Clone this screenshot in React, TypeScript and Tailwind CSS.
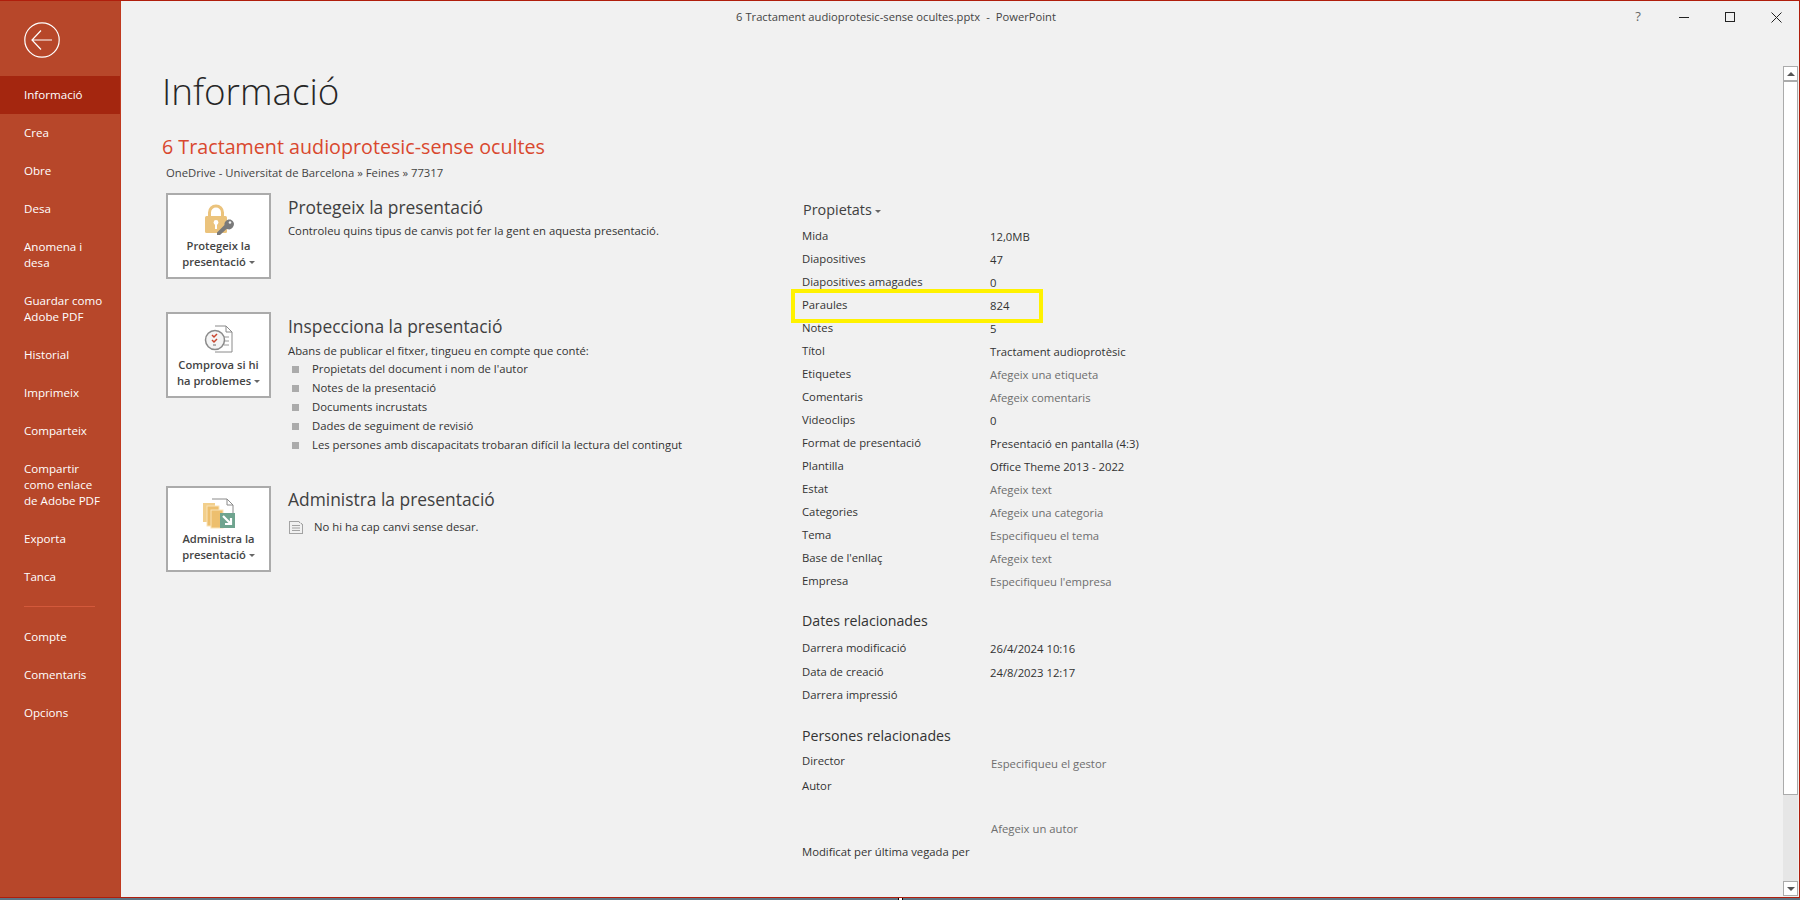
const sideItems = [
  { label: ["Informació"], active: true },
  { label: ["Crea"] },
  { label: ["Obre"] },
  { label: ["Desa"] },
  { label: ["Anomena i", "desa"] },
  { label: ["Guardar como", "Adobe PDF"] },
  { label: ["Historial"] },
  { label: ["Imprimeix"] },
  { label: ["Comparteix"] },
  { label: ["Compartir", "como enlace", "de Adobe PDF"] },
  { label: ["Exporta"] },
  { label: ["Tanca"] },
];

const sideBottom = ["Compte", "Comentaris", "Opcions"];

const props = [
  ["Mida", "12,0MB"],
  ["Diapositives", "47"],
  ["Diapositives amagades", "0"],
  ["Paraules", "824"],
  ["Notes", "5"],
  ["Títol", "Tractament audioprotèsic"],
  ["Etiquetes", "Afegeix una etiqueta", "muted"],
  ["Comentaris", "Afegeix comentaris", "muted"],
  ["Videoclips", "0"],
  ["Format de presentació", "Presentació en pantalla (4:3)"],
  ["Plantilla", "Office Theme 2013 - 2022"],
  ["Estat", "Afegeix text", "muted"],
  ["Categories", "Afegeix una categoria", "muted"],
  ["Tema", "Especifiqueu el tema", "muted"],
  ["Base de l'enllaç", "Afegeix text", "muted"],
  ["Empresa", "Especifiqueu l'empresa", "muted"],
];

const issues = [
  "Propietats del document i nom de l'autor",
  "Notes de la presentació",
  "Documents incrustats",
  "Dades de seguiment de revisió",
  "Les persones amb discapacitats trobaran difícil la lectura del contingut",
];

function Caret() {
  return <span className="ml-[3px] inline-block h-0 w-0 border-x-[3px] border-t-[3px] border-x-transparent border-t-[#666] align-middle" />;
}

function LockIcon() {
  return (
    <svg width="32" height="32" viewBox="0 0 32 32">
      <path d="M6.5 13V8.5a6.5 6.5 0 0 1 13 0V13" fill="none" stroke="#EBC37C" strokeWidth="3" />
      <rect x="2" y="12" width="22" height="17" rx="1.5" fill="#EBC37C" />
      <circle cx="13" cy="18.5" r="2.4" fill="#fff" />
      <rect x="12" y="19" width="2" height="6" fill="#fff" />
      <path d="M14 28.5l0 2.5 3 0 6.5-6 3 0.5c2.5-.5 4.5-3 4.5-5.5 0-2-2-4.5-4.5-4.5-3 0-5.5 2.5-5 5.5z" fill="#7A7A7A" />
      <circle cx="27" cy="18.5" r="1.3" fill="#F1F1F1" />
    </svg>
  );
}

function CheckIcon() {
  return (
    <svg width="30" height="30" viewBox="0 0 30 30" fill="none">
      <path d="M11 2h11l6 6v20H11" fill="#fff" stroke="#8A8A8A" />
      <path d="M22 2v6h6" stroke="#8A8A8A" />
      <path d="M20 13h5M20 17h5M20 21h5" stroke="#9A9A9A" />
      <circle cx="11" cy="16" r="9.5" fill="#F4F4F4" stroke="#8A8A8A" strokeWidth="1.5" />
      <path d="M8 11l2 2 3-3M8 16l2 2 3-3" stroke="#C8452E" strokeWidth="1.5" />
      <rect x="9" y="20" width="3" height="2" fill="#B0B0B0" />
    </svg>
  );
}

function ManageIcon() {
  return (
    <svg width="34" height="32" viewBox="0 0 34 32" fill="none">
      <path d="M10 2h15l6 6v8" fill="#fff" stroke="#8A8A8A" />
      <path d="M25 2v6h6" stroke="#8A8A8A" />
      <rect x="1" y="6" width="12" height="19" fill="#F2CF8C" />
      <rect x="5" y="9" width="12" height="20" fill="#EDBF6E" stroke="#F9E3B8" />
      <rect x="9" y="13" width="12" height="18" fill="#EDBF6E" stroke="#F9E3B8" />
      <rect x="18" y="16" width="15" height="15" fill="#6FA48F" />
      <path d="M21 19l8 8M29 21v6h-6" stroke="#fff" strokeWidth="2.2" />
    </svg>
  );
}

function SmallDoc() {
  return (
    <svg width="16" height="16" viewBox="0 0 16 16" fill="none" stroke="#555">
      <path d="M1.5 2.5h9l4 3v9h-13z" strokeDasharray="1 1" />
      <path d="M4.5 6.5h7M4.5 9h7M4.5 11.5h7" strokeDasharray="1 1" />
    </svg>
  );
}

function BigButton({ icon, lines }: { icon: React.ReactNode; lines: string[] }) {
  return (
    <div className="flex h-[86px] w-[105px] shrink-0 flex-col items-center border-2 border-[#ABABAB] bg-white text-[11.2px] font-semibold leading-[15.5px] text-[#444]">
      <div className="mt-[9px] flex h-[32px] items-center justify-center">{icon}</div>
      <div className="mt-[2px] whitespace-nowrap text-center">
        <div>{lines[0]}</div>
        <div>
          {lines[1]}
          <Caret />
        </div>
      </div>
    </div>
  );
}

function PropRow({ name, value, muted, highlight, h }: { name: string; value: string; muted?: boolean; highlight?: boolean; h?: string }) {
  return (
    <div className={`relative flex items-center ${h ?? "h-[23px]"}`}>
      <div className="w-[188px] shrink-0 text-[#333]">{name}</div>
      <div className={`pt-[2px] ${muted ? "text-[#6E6E6E]" : "text-[#333]"}`}>{value}</div>
      {highlight && <div className="absolute left-[-11px] top-[-5px] h-[34px] w-[252px] border-4 border-[#FFF200]" />}
    </div>
  );
}

export default function App() {
  return (
    <div
      className="flex h-[900px] w-[1800px] flex-col overflow-hidden bg-[#F1F1F1] text-[11.3px]"
      style={{ fontFamily: '"Open Sans", "Noto Sans", sans-serif' }}
    >
      <div className="flex min-h-0 flex-1 border-t-[1px] border-r-[1px] border-b-[1px] border-[#B01E0C]">
        <aside className="flex w-[121px] shrink-0 flex-col border-r border-[#C0391F] bg-[#B7472A] text-[11.6px] text-white">
          <div className="flex h-[75px] items-start pl-[24px] pt-[21px]">
            <svg width="36" height="36" viewBox="0 0 36 36" fill="none" stroke="#fff" strokeWidth="1.2">
              <circle cx="18" cy="18" r="17.2" />
              <path d="M8 18h20M17 8.5L8 18l9 9.5" />
            </svg>
          </div>
          {sideItems.map((it) => (
            <div
              key={it.label[0]}
              className={`flex flex-col justify-center pl-[24px] leading-[16px] ${it.active ? "bg-[#A4260F]" : ""} ${it.label.length === 1 ? "h-[38px]" : it.label.length === 2 ? "h-[54px]" : "h-[70px]"}`}
            >
              {it.label.map((l) => (
                <div key={l} className="whitespace-nowrap">{l}</div>
              ))}
            </div>
          ))}
          <div className="ml-[24px] mt-[10px] h-px w-[71px] bg-[#D4593B]" />
          <div className="mt-[11px]">
            {sideBottom.map((s) => (
              <div key={s} className="flex h-[38px] items-center pl-[24px]">{s}</div>
            ))}
          </div>
        </aside>

        <main className="flex min-w-0 flex-1 flex-col">
          <div className="flex h-[31px] shrink-0 items-center text-[#444]">
            <div className="w-[1494px] pl-[56px] pt-[2px] text-center text-[11.2px]">
              <span>6 Tractament audioprotesic-sense ocultes.pptx</span>
              <span className="ml-[6px]">-</span>
              <span className="ml-[6px]">PowerPoint</span>
            </div>
            <div className="flex items-center pt-[1px]">
              <div className="w-[46px] text-center text-[13px] text-[#666]">?</div>
              <div className="flex w-[46px] justify-center">
                <div className="h-px w-[10px] bg-[#222]" />
              </div>
              <div className="flex w-[46px] justify-center">
                <div className="h-[10px] w-[10px] border border-[#222]" />
              </div>
              <div className="flex w-[46px] justify-center">
                <svg width="11" height="11" viewBox="0 0 11 11" stroke="#222">
                  <path d="M.5.5l10 10M10.5.5l-10 10" />
                </svg>
              </div>
            </div>
          </div>

          <div className="flex min-h-0 flex-1">
            <div className="min-w-0 flex-1 pl-[41px]">
              <h1 className="mt-[33px] text-[36.8px] font-light leading-[52px] text-[#262626]">Informació</h1>
              <div className="mt-[17px] text-[19.7px] leading-[26px] text-[#D9482E]">6 Tractament audioprotesic-sense ocultes</div>
              <div className="ml-[4px] mt-[4px] leading-[18px] text-[#444]">OneDrive - Universitat de Barcelona » Feines » 77317</div>

              <div className="mt-[11px] flex">
                <div className="w-[640px] shrink-0 pl-[4px]">
                  <div className="flex">
                    <BigButton icon={<LockIcon />} lines={["Protegeix la", "presentació"]} />
                    <div className="ml-[17px] text-[#333]">
                      <div className="mt-[1px] text-[17.4px] leading-[26px] text-[#404040]">Protegeix la presentació</div>
                      <div className="mt-[2px] leading-[18px]">Controleu quins tipus de canvis pot fer la gent en aquesta presentació.</div>
                    </div>
                  </div>

                  <div className="mt-[33px] flex">
                    <BigButton icon={<CheckIcon />} lines={["Comprova si hi", "ha problemes"]} />
                    <div className="ml-[17px] text-[#333]">
                      <div className="mt-[1px] text-[17.4px] leading-[26px] text-[#404040]">Inspecciona la presentació</div>
                      <div className="mt-[2px] leading-[19px]">Abans de publicar el fitxer, tingueu en compte que conté:</div>
                      {issues.map((t) => (
                        <div key={t} className="flex h-[19px] items-center">
                          <div className="ml-[4px] mr-[13px] h-[7px] w-[7px] bg-[#ABABAB]" />
                          <span className="whitespace-nowrap">{t}</span>
                        </div>
                      ))}
                    </div>
                  </div>

                  <div className="mt-[31px] flex">
                    <BigButton icon={<ManageIcon />} lines={["Administra la", "presentació"]} />
                    <div className="ml-[17px] text-[#333]">
                      <div className="text-[17.4px] leading-[26px] text-[#404040]">Administra la presentació</div>
                      <div className="mt-[6px] flex items-center leading-[18px]">
                        <SmallDoc />
                        <span className="ml-[10px]">No hi ha cap canvi sense desar.</span>
                      </div>
                    </div>
                  </div>
                </div>

                <div>
                  <div className="mt-[6px] ml-[1px] text-[14.4px] leading-[22px] text-[#404040]">
                    Propietats
                    <Caret />
                  </div>
                  <div className="mt-[4px]">
                    {props.map((p) => (
                      <PropRow key={p[0]} name={p[0]} value={p[1]} muted={p[2] === "muted"} highlight={p[0] === "Paraules"} />
                    ))}
                  </div>

                  <div className="mt-[17px] text-[14.2px] leading-[22px] text-[#333]">Dates relacionades</div>
                  <div className="mt-[4px]">
                    <PropRow name="Darrera modificació" value="26/4/2024 10:16" h="h-[24px]" />
                    <PropRow name="Data de creació" value="24/8/2023 12:17" h="h-[24px]" />
                    <PropRow name="Darrera impressió" value="" h="h-[23px]" />
                  </div>

                  <div className="mt-[18px] text-[14.2px] leading-[22px] text-[#333]">Persones relacionades</div>
                  <div className="mt-[2px] flex text-[#333]">
                    <div className="w-[189px] shrink-0 pt-[4px] leading-[16px]">
                      <div>Director</div>
                      <div className="mt-[9px]">Autor</div>
                    </div>
                    <div className="pt-[7px] leading-[16px] text-[#6E6E6E]">
                      <div>Especifiqueu el gestor</div>
                      <div className="mt-[49px]">Afegeix un autor</div>
                    </div>
                  </div>
                  <div className="mt-[7px] leading-[16px] text-[#333]">Modificat per última vegada per</div>
                </div>
              </div>
            </div>

            <div className="mb-[1px] mr-[1px] mt-[34px] flex w-[15px] shrink-0 flex-col bg-[#E6E6E6]">
              <div className="flex h-[15px] items-center justify-center border border-[#ABABAB] bg-white">
                <div className="h-0 w-0 border-x-[4px] border-b-[4px] border-x-transparent border-b-[#555]" />
              </div>
              <div className="h-[714px] border border-[#ABABAB] bg-white" />
              <div className="flex-1" />
              <div className="flex h-[15px] items-center justify-center border border-[#ABABAB] bg-white">
                <div className="h-0 w-0 border-x-[4px] border-t-[4px] border-x-transparent border-t-[#555]" />
              </div>
            </div>
          </div>
        </main>
      </div>
      <div className="flex h-[2px] shrink-0 justify-center bg-[#5F7484]">
        <div className="h-[2px] w-[5px] border-x border-black bg-white" />
      </div>
    </div>
  );
}
